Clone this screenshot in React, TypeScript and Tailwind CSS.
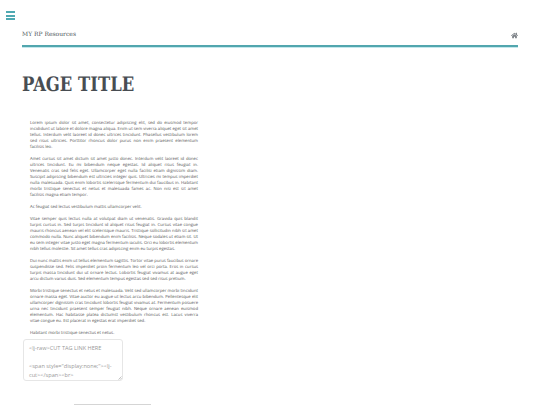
import { FaHome } from "react-icons/fa";

const paragraphs = [
  "Lorem ipsum dolor sit amet, consectetur adipiscing elit, sed do eiusmod tempor incididunt ut labore et dolore magna aliqua. Enim ut sem viverra aliquet eget sit amet tellus. Interdum velit laoreet id donec ultrices tincidunt. Phasellus vestibulum lorem sed risus ultricies. Porttitor rhoncus dolor purus non enim praesent elementum facilisis leo.",
  "Amet cursus sit amet dictum sit amet justo donec. Interdum velit laoreet id donec ultrices tincidunt. Eu mi bibendum neque egestas. Id aliquet risus feugiat in. Venenatis cras sed felis eget. Ullamcorper eget nulla facilisi etiam dignissim diam. Suscipit adipiscing bibendum est ultricies integer quis. Ultricies mi tempus imperdiet nulla malesuada. Quis enim lobortis scelerisque fermentum dui faucibus in. Habitant morbi tristique senectus et netus et malesuada fames ac. Non nisi est sit amet facilisis magna etiam tempor.",
  "Ac feugiat sed lectus vestibulum mattis ullamcorper velit.",
  "Vitae semper quis lectus nulla at volutpat diam ut venenatis. Gravida quis blandit turpis cursus in. Sed turpis tincidunt id aliquet risus feugiat in. Cursus vitae congue mauris rhoncus aenean vel elit scelerisque mauris. Tristique sollicitudin nibh sit amet commodo nulla. Nunc aliquet bibendum enim facilisis. Neque sodales ut etiam sit. Ut eu sem integer vitae justo eget magna fermentum iaculis. Orci eu lobortis elementum nibh tellus molestie. Sit amet tellus cras adipiscing enim eu turpis egestas.",
  "Dui nunc mattis enim ut tellus elementum sagittis. Tortor vitae purus faucibus ornare suspendisse sed. Felis imperdiet proin fermentum leo vel orci porta. Eros in cursus turpis massa tincidunt dui ut ornare lectus. Lobortis feugiat vivamus at augue eget arcu dictum varius duis. Sed elementum tempus egestas sed sed risus pretium.",
  "Morbi tristique senectus et netus et malesuada. Velit sed ullamcorper morbi tincidunt ornare massa eget. Vitae auctor eu augue ut lectus arcu bibendum. Pellentesque elit ullamcorper dignissim cras tincidunt lobortis feugiat vivamus at. Fermentum posuere urna nec tincidunt praesent semper feugiat nibh. Neque ornare aenean euismod elementum. Hac habitasse platea dictumst vestibulum rhoncus est. Lacus viverra vitae congue eu. Est placerat in egestas erat imperdiet sed.",
  "Habitant morbi tristique senectus et netus.",
];

const snippet = `<lj-raw>CUT TAG LINK HERE

<span style="display:none;"><lj-cut></span><br>`;

export default function App() {
  return (
    <div className="h-[405px] w-[540px] overflow-hidden bg-white font-['Open_Sans',sans-serif] [text-rendering:geometricPrecision]">
      <div className="flex h-[28px] flex-col justify-end pl-[6px]">
        <div className="flex w-[9px] flex-col gap-[1.5px] pb-[8px]">
          <span className="h-[2px] bg-[#4fa9b2]" />
          <span className="h-[2px] bg-[#4fa9b2]" />
          <span className="h-[2px] bg-[#4fa9b2]" />
        </div>
      </div>

      <header className="mx-[22px] flex h-[19px] items-center justify-between border-b-[2px] border-[#52a6ae] pb-[3px] shadow-[0_1px_0_#c4e8ec]">
        <span className="font-['DejaVu_Serif',serif] text-[6px] leading-none text-[#50555a]">MY RP Resources</span>
        <FaHome size={7} color="#7b8086" />
      </header>

      <h1 className="ml-[22px] mt-[25px] origin-left scale-x-[0.82] whitespace-nowrap font-['DejaVu_Serif',serif] text-[20px] font-bold leading-[24px] text-[#484d52]">
        PAGE TITLE
      </h1>

      <main className="ml-[30px] mt-[24px] w-[168px]">
        {paragraphs.map((p) => (
          <p key={p.slice(0, 12)} className="mb-[6px] text-justify text-[4.24px] leading-[6px] text-[#555555] last:mb-0">
            {p}
          </p>
        ))}
      </main>

      <div className="relative ml-[23px] mt-[3px] h-[42px] w-[100px]">
        <textarea
          readOnly
          value={snippet}
          className="block h-full w-full resize-none overflow-hidden rounded-[3px] border border-[#e6e6e6] bg-white px-[5px] py-[4px] font-['Open_Sans',sans-serif] text-[5.6px] leading-[9px] text-[#999999] outline-none"
        />
        <svg className="absolute bottom-[1px] right-[1px]" width="4" height="4" viewBox="0 0 4 4">
          <path d="M0.5 3.5 L3.5 0.5 M2.2 3.5 L3.5 2.2" stroke="#8a8a8a" strokeWidth="0.5" />
        </svg>
      </div>

      <div className="ml-[74px] mt-[23px] h-[1px] w-[77px] bg-[#d5d5d5]" />
    </div>
  );
}
